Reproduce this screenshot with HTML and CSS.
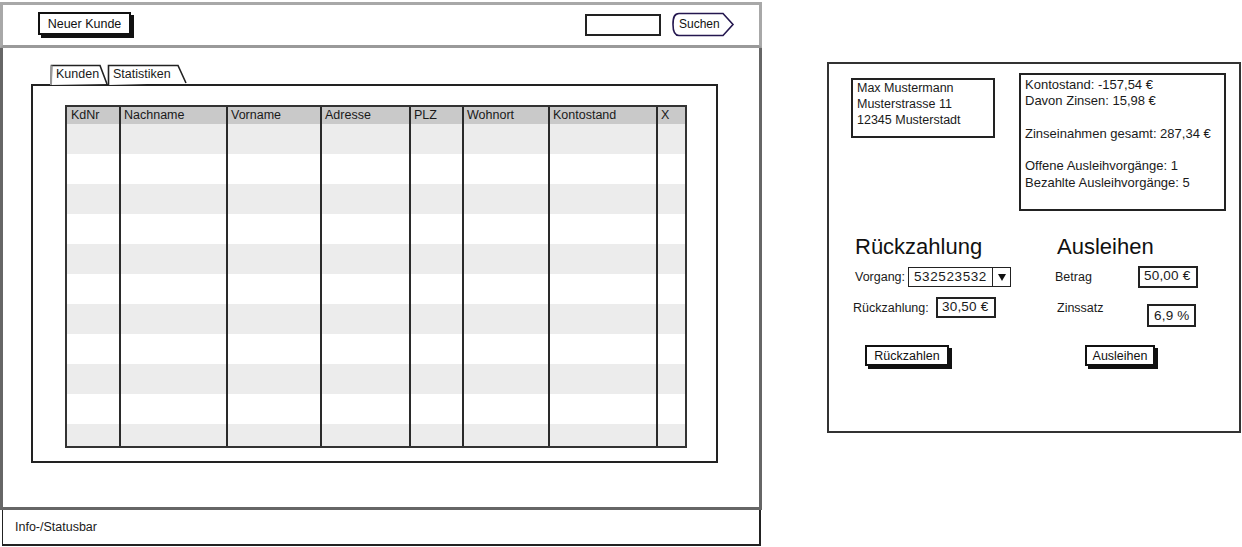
FILE: index.html
```html
<!DOCTYPE html>
<html lang="de">
<head>
<meta charset="utf-8">
<title>Kundenverwaltung</title>
<link rel="stylesheet" href="styles.css">
</head>
<body>
<div class="canvas">
  <section class="window">
    <header class="toolbar">
      <button class="btn btn-new">Neuer Kunde</button>
      <div class="search">
        <span class="search-field"></span>
        <span class="search-btn">
          <svg class="search-shape" width="64" height="25" viewBox="0 0 64 25"><path d="M8 1.5 H52 L62 12.5 L52 23.5 H8 C3.5 23.5 2 20 2 12.5 C2 5 3.5 1.5 8 1.5 Z" fill="#fff" stroke="#24174f" stroke-width="1.6"/></svg>
          <span class="search-label">Suchen</span>
        </span>
      </div>
    </header>
    <main class="workspace">
      <div class="tabs">
        <span class="tab tab-kunden">
          <svg class="tab-shape" width="58" height="21" viewBox="0 0 58 21"><path d="M1 21 L1.5 1.5 H50 L57 20" fill="#fff" stroke="#222" stroke-width="1.6"/><path d="M1 21 L1.5 1.5" stroke="#999" stroke-width="2"/></svg>
          <span class="tab-label">Kunden</span>
        </span>
        <span class="tab tab-stat">
          <svg class="tab-shape" width="80" height="21" viewBox="0 0 80 21"><path d="M1.5 21 L1.5 1.5 H71 L79 19" fill="#fff" stroke="#222" stroke-width="1.6"/></svg>
          <span class="tab-label">Statistiken</span>
        </span>
      </div>
      <div class="tab-panel">
        <div class="grid-wrap">
          <table class="grid">
            <colgroup>
              <col style="width:52px"><col style="width:107px"><col style="width:94px"><col style="width:89px"><col style="width:53px"><col style="width:86px"><col style="width:108px"><col style="width:29px">
            </colgroup>
            <thead>
              <tr><th>KdNr</th><th>Nachname</th><th>Vorname</th><th>Adresse</th><th>PLZ</th><th>Wohnort</th><th>Kontostand</th><th>X</th></tr>
            </thead>
            <tbody>
              <tr><td></td><td></td><td></td><td></td><td></td><td></td><td></td><td></td></tr>
              <tr><td></td><td></td><td></td><td></td><td></td><td></td><td></td><td></td></tr>
              <tr><td></td><td></td><td></td><td></td><td></td><td></td><td></td><td></td></tr>
              <tr><td></td><td></td><td></td><td></td><td></td><td></td><td></td><td></td></tr>
              <tr><td></td><td></td><td></td><td></td><td></td><td></td><td></td><td></td></tr>
              <tr><td></td><td></td><td></td><td></td><td></td><td></td><td></td><td></td></tr>
              <tr><td></td><td></td><td></td><td></td><td></td><td></td><td></td><td></td></tr>
              <tr><td></td><td></td><td></td><td></td><td></td><td></td><td></td><td></td></tr>
              <tr><td></td><td></td><td></td><td></td><td></td><td></td><td></td><td></td></tr>
              <tr><td></td><td></td><td></td><td></td><td></td><td></td><td></td><td></td></tr>
              <tr><td></td><td></td><td></td><td></td><td></td><td></td><td></td><td></td></tr>
            </tbody>
          </table>
        </div>
      </div>
    </main>
    <footer class="statusbar">Info-/Statusbar</footer>
  </section>

  <section class="detail">
    <div class="top-row">
      <div class="name-box">Max Mustermann<br>Musterstrasse 11<br>12345 Musterstadt</div>
      <div class="stats-box">Kontostand: -157,54 €<br>Davon Zinsen: 15,98 €<br><br>Zinseinahmen gesamt: 287,34 €<br><br>Offene Ausleihvorgänge: 1<br>Bezahlte Ausleihvorgänge: 5</div>
    </div>
    <div class="forms">
      <div class="form-col col-left">
        <h2 class="heading">Rückzahlung</h2>
        <div class="row row-1">
          <span class="label label-vorgang">Vorgang:</span>
          <span class="dropdown"><span class="dropdown-value">532523532</span><span class="dropdown-arrow"></span></span>
        </div>
        <div class="row row-2">
          <span class="label label-rueck">Rückzahlung:</span>
          <span class="field field-rueck">30,50 €</span>
        </div>
        <button class="btn btn-rueck">Rückzahlen</button>
      </div>
      <div class="form-col col-right">
        <h2 class="heading">Ausleihen</h2>
        <div class="row row-1r">
          <span class="label label-betrag">Betrag</span>
          <span class="field field-betrag">50,00 €</span>
        </div>
        <div class="row row-2r">
          <span class="label label-zins">Zinssatz</span>
          <span class="field field-zins">6,9 %</span>
        </div>
        <button class="btn btn-aus">Ausleihen</button>
      </div>
    </div>
  </section>
</div>
</body>
</html>
```

FILE: styles.css
```css
* { box-sizing: border-box; }

body {
  margin: 0;
  background: #fff;
  color: #1a1a1a;
  font-family: "Liberation Sans", Arial, sans-serif;
  font-size: 12.5px;
}

.canvas {
  display: flex;
  align-items: flex-start;
}

/* ---------- left window ---------- */
.window {
  width: 762px;
  margin-top: 2px;
  display: flex;
  flex-direction: column;
}

.toolbar {
  height: 46px;
  border: 3px solid #a8a8a8;
  border-bottom-color: #9a9a9a;
  display: flex;
  align-items: flex-start;
  justify-content: space-between;
  padding: 7px 24px 0 35px;
}

.btn {
  font: inherit;
  color: #111;
  background: #fff;
  border: 2px solid #111;
  box-shadow: 3px 3px 0 #111;
  padding: 0;
  text-align: center;
  white-space: nowrap;
  cursor: pointer;
}

.btn-new {
  width: 93px;
  height: 23px;
}

.search {
  display: flex;
  align-items: flex-start;
  gap: 10px;
}

.search-field {
  display: block;
  width: 76px;
  height: 22px;
  margin-top: 2px;
  border: 2px solid #222;
  background: #fff;
}

.search-btn {
  position: relative;
  display: block;
  width: 64px;
  height: 25px;
}

.search-shape {
  position: absolute;
  left: 0;
  top: 0;
}

.search-label {
  position: relative;
  display: block;
  padding-left: 8px;
  line-height: 25px;
  font-size: 12px;
  color: #111;
}

.workspace {
  height: 462px;
  border: 3px solid #666;
  border-top: 0;
  padding-top: 16px;
}

.tabs {
  display: flex;
  margin-left: 47px;
  height: 20px;
}

.tab {
  position: relative;
  display: block;
  height: 21px;
}

.tab-kunden { width: 58px; }
.tab-stat { width: 80px; margin-left: -1px; }

.tab-shape {
  position: absolute;
  left: 0;
  top: 0;
}

.tab-label {
  position: relative;
  display: block;
  padding-left: 6px;
  line-height: 21px;
}

.tab-panel {
  margin-left: 28px;
  width: 687px;
  height: 379px;
  border: 2px solid #222;
  padding: 19px 0 0 32px;
}

.grid-wrap {
  width: 622px;
  height: 343px;
  border: 2px solid #333;
  overflow: hidden;
}

.grid {
  table-layout: fixed;
  border-collapse: separate;
  border-spacing: 0;
  width: 618px;
}

.grid th,
.grid td {
  border-left: 2px solid #2a2a2a;
  padding: 0 0 0 3px;
  text-align: left;
  font-weight: normal;
}

.grid th:first-child,
.grid td:first-child {
  border-left: 0;
  padding-left: 4px;
}

.grid thead tr {
  height: 17px;
  background: #c9c9c9;
}

.grid th {
  line-height: 17px;
  color: #1a1a1a;
}

.grid tbody tr { height: 30px; }
.grid tbody tr:nth-child(odd) { background: #ececec; }
.grid tbody tr:nth-child(even) { background: #fff; }

.statusbar {
  height: 36px;
  width: 759px;
  margin-left: 2px;
  border: 2px solid #222;
  border-top: 0;
  border-left-width: 1.5px;
  padding-left: 12px;
  line-height: 34px;
}

/* ---------- right panel ---------- */
.detail {
  margin-left: 65px;
  margin-top: 62px;
  width: 414px;
  height: 371px;
  border: 2px solid #333;
  padding: 9px 0 0 22px;
}

.top-row {
  display: flex;
  align-items: flex-start;
}

.name-box {
  margin-top: 5px;
  width: 144px;
  height: 60px;
  border: 2px solid #222;
  padding: 0 4px;
  line-height: 16px;
}

.stats-box {
  margin-left: 24px;
  width: 207px;
  height: 138px;
  border: 2px solid #222;
  padding: 2px 4px;
  font-size: 13px;
  line-height: 16.3px;
  white-space: nowrap;
}

.forms {
  display: flex;
  margin-top: 23px;
  margin-left: 2px;
}

.form-col {
  display: flex;
  flex-direction: column;
  align-items: flex-start;
}

.col-left { width: 202px; }

.heading {
  margin: 0 0 0 2px;
  font-size: 22px;
  font-weight: normal;
  line-height: 26px;
  color: #111;
}

.row {
  display: flex;
  align-items: center;
}

.label { display: block; white-space: nowrap; }

.row-1 { margin-top: 7px; height: 20px; }
.label-vorgang { width: 55px; padding-left: 2px; }

.dropdown {
  display: flex;
  width: 103px;
  height: 20px;
  border: 1.5px solid #222;
}

.dropdown-value {
  flex: 1;
  padding-left: 5px;
  line-height: 17px;
  font-size: 13.5px;
  letter-spacing: 0.6px;
  white-space: nowrap;
}

.dropdown-arrow {
  width: 18px;
  border-left: 1.5px solid #222;
  display: flex;
  align-items: center;
  justify-content: center;
}

.dropdown-arrow::after {
  content: "";
  border-left: 4.5px solid transparent;
  border-right: 4.5px solid transparent;
  border-top: 7px solid #111;
}

.row-2 { margin-top: 10px; height: 21px; }
.label-rueck { width: 83px; }

.field {
  display: block;
  border: 2px solid #222;
  padding: 0 0 0 4px;
  font-size: 13.5px;
  letter-spacing: 0.2px;
  white-space: nowrap;
  overflow: hidden;
  background: #fff;
}

.field-rueck { width: 60px; height: 21px; line-height: 15px; }

.btn-rueck {
  margin-top: 27px;
  margin-left: 12px;
  width: 84px;
  height: 21px;
}

.row-1r { margin-top: 6px; height: 22px; }
.label-betrag { width: 83px; }
.field-betrag { width: 60px; height: 22px; line-height: 16px; }

.row-2r { margin-top: 10px; align-items: flex-start; }
.label-zins { width: 92px; padding-left: 2px; line-height: 20px; }
.field-zins { width: 49px; height: 23px; margin-top: 6px; line-height: 19px; padding-left: 5px; }

.btn-aus {
  margin-top: 18px;
  margin-left: 30px;
  width: 70px;
  height: 21px;
}
```
